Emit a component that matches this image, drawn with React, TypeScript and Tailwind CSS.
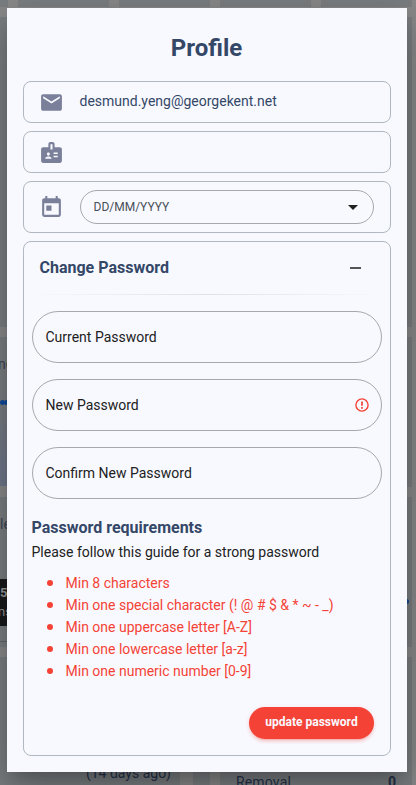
import React from "react";
import { MdEmail, MdBadge, MdToday, MdArrowDropDown } from "react-icons/md";

const tile = "bg-[#7b7f82]";

const requirements = [
  "Min 8 characters",
  "Min one special character (! @ # $ & * ~ - _)",
  "Min one uppercase letter [A-Z]",
  "Min one lowercase letter [a-z]",
  "Min one numeric number [0-9]",
];

function Dashboard() {
  return (
    <div className="flex h-[785px] w-[416px] flex-col gap-[10px] overflow-hidden bg-[#8a8a8a] text-[#26324a]">
      <div className="flex h-[7px] shrink-0 gap-[10px]">
        <div className={`w-2 ${tile}`} />
        <div className={`w-[91px] ${tile}`} />
        <div className={`w-[91px] ${tile}`} />
        <div className={`w-[91px] ${tile}`} />
        <div className={`w-[91px] ${tile}`} />
      </div>
      <div className={`h-[310px] w-[412px] shrink-0 ${tile}`} />
      <div className={`h-[150px] w-[412px] shrink-0 ${tile}`}>
        <div className="flex h-full w-[7px] flex-col justify-between">
          <div className="-ml-[2px] mt-[18px] w-4 text-[14px] leading-[18px] text-[#3d4654]">ng</div>
          <div className="flex h-[96px] flex-col border-b border-[#888b8e] bg-gradient-to-b from-[#7b7f82] to-[#6f788c] pt-[9px]">
            <div className="flex">
              <span className="size-[5px] shrink-0 rounded-full bg-[#114b9c]" />
              <span className="-ml-px size-[5px] shrink-0 rounded-full bg-[#114b9c]" />
            </div>
          </div>
        </div>
      </div>
      <div className={`flex h-[150px] w-[412px] shrink-0 justify-between ${tile}`}>
        <div className="flex w-[7px] flex-col">
          <div className="mt-[18px] h-[64px] text-[14px] leading-[18px] text-[#3d4654]">le</div>
          <div className="h-[47px] w-[30px] bg-[#191a1c] pt-[4px] text-[13px] leading-[19px] text-[#969696]">
            <div className="font-bold">5</div>
            <div className="-ml-[2px]">ns</div>
          </div>
          <div className="mt-[15px] h-px bg-[#63676a]" />
        </div>
        <span className="mr-[3px] mt-[102px] size-[5px] rounded-full bg-[#174994]" />
      </div>
      <div className="flex flex-1 items-stretch">
        <div className={`flex w-[180px] items-end justify-end pr-[9px] ${tile}`}>
          <span className="mb-[2px] text-[14px] leading-5">(14 days ago)</span>
        </div>
        <div className={`ml-[13px] w-[17px] ${tile}`} />
        <div className={`ml-[10px] flex w-[192px] items-end justify-between pl-4 pr-4 ${tile}`}>
          <span className="-mb-[7px] text-[14px] leading-5 tracking-[0.15px]">Removal</span>
          <span className="-mb-[7px] text-[14px] font-bold leading-5">0</span>
        </div>
      </div>
    </div>
  );
}

function ErrorIcon() {
  return (
    <svg viewBox="0 0 16 16" className="size-4" fill="none" stroke="#f44336">
      <circle cx="8" cy="8" r="6.1" strokeWidth="1.4" />
      <path d="M8 4.5v4.2M8 10v1.7" strokeWidth="1.7" />
    </svg>
  );
}

function PasswordField({ label, error = false }: { label: string; error?: boolean }) {
  return (
    <div className="flex h-[52px] items-center justify-between rounded-full border border-[#a6a8ac] pl-[12.5px] pr-[11px] text-[14px] text-[#212121]">
      <span>{label}</span>
      {error && <ErrorIcon />}
    </div>
  );
}

export default function App() {
  return (
    <div className="relative h-[785px] w-[416px] overflow-hidden font-['Roboto',sans-serif]">
      <Dashboard />
      <div className="absolute inset-0 flex items-start pl-[7px] pt-2">
        <div className="flex h-[764px] w-[400px] flex-col gap-2 bg-[#f8f9ff] px-4 pb-4 shadow-[0_11px_15px_-7px_rgba(0,0,0,0.2),0_24px_38px_3px_rgba(0,0,0,0.14),0_9px_46px_8px_rgba(0,0,0,0.12)]">
          <h1 className="mb-[9px] mt-6 pr-px text-center text-[24px] font-bold leading-8 text-[#344767]">Profile</h1>

          <div className="flex h-[42px] shrink-0 items-center gap-4 rounded-lg border border-[#b0b8c1] pl-[15px] text-[#7b809a]">
            <MdEmail className="size-[25px]" />
            <span className="-ml-[0.5px] -mt-px text-[14px] text-[#344767]">desmund.yeng@georgekent.net</span>
          </div>

          <div className="flex h-[42px] shrink-0 items-center rounded-lg border border-[#b0b8c1] pl-[15px] text-[#7b809a]">
            <MdBadge className="size-[25px]" />
          </div>

          <div className="flex h-[52px] shrink-0 items-center gap-4 rounded-lg border border-[#b0b8c1] pl-[15px] pr-4 text-[#7b809a]">
            <MdToday className="size-[25px]" />
            <div className="flex h-[34px] flex-1 items-center justify-between rounded-full border border-[#a6a8ac] pl-[12.5px] pr-[8px]">
              <span className="text-[12px] text-[#495057]">DD/MM/YYYY</span>
              <MdArrowDropDown className="size-6 text-[#212121]" />
            </div>
          </div>

          <section className="flex flex-1 flex-col rounded-lg border border-[#b0b8c1] px-2">
            <div className="flex h-[52px] items-center justify-between pl-[7.5px] pr-[21px]">
              <h2 className="text-[16px] font-bold text-[#344767]">Change Password</h2>
              <span className="h-[2px] w-[11px] bg-[#535557]" />
            </div>
            <div className="h-px bg-gradient-to-r from-transparent via-[#dfe1ea] to-transparent" />
            <div className="mt-4 flex flex-col gap-4">
              <PasswordField label="Current Password" />
              <PasswordField label="New Password" error />
              <PasswordField label="Confirm New Password" />
            </div>
            <h3 className="-ml-[0.5px] mt-[17px] text-[16px] font-bold leading-6 text-[#344767]">Password requirements</h3>
            <p className="-ml-[0.5px] mt-px text-[14px] leading-[22px] text-[#212121]">
              Please follow this guide for a strong password
            </p>
            <ul className="mt-[9px] text-[14px] leading-[22px] text-[#f44336]">
              {requirements.map((item) => (
                <li key={item} className="flex items-center gap-[12.5px] pl-[15px]">
                  <span className="size-[6px] rounded-full bg-[#f44336]" />
                  {item}
                </li>
              ))}
            </ul>
            <button className="mb-4 mr-2 mt-auto h-8 w-[125px] self-end rounded-full bg-[#f44336] pb-[2px] text-[12px] font-bold text-[#f8f9ff] shadow-[0_3px_3px_rgba(244,67,54,0.15),0_3px_1px_-2px_rgba(244,67,54,0.2),0_1px_5px_rgba(244,67,54,0.15)]">
              update password
            </button>
          </section>
        </div>
      </div>
    </div>
  );
}
